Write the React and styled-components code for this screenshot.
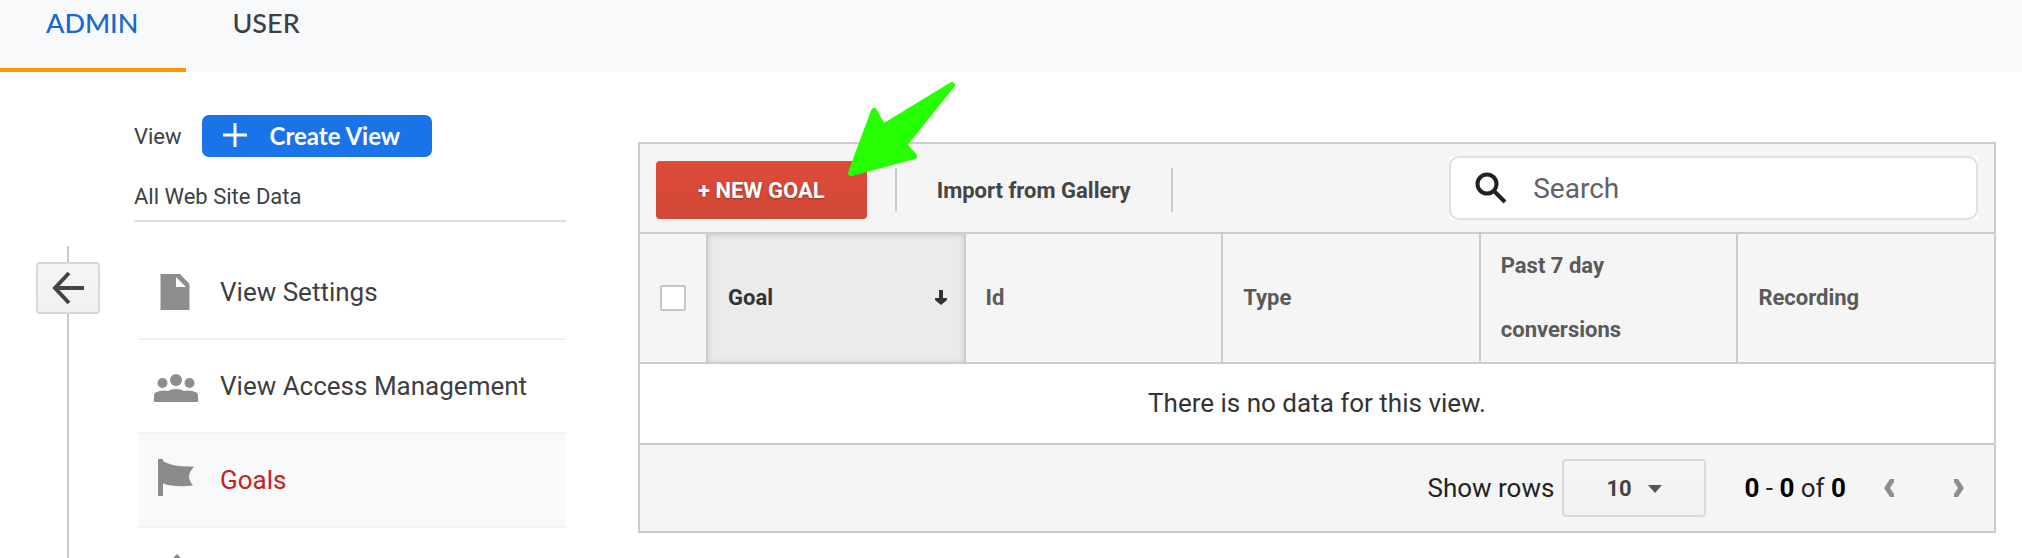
import { useState } from "react";
import styled, { createGlobalStyle } from "styled-components";

const menuItems = [
  { id: "settings", label: "View Settings", icon: <FileIcon /> },
  { id: "access", label: "View Access Management", icon: <PeopleIcon /> },
  { id: "goals", label: "Goals", icon: <FlagIcon /> },
];

const columns = ["Id", "Type", "Past 7 day conversions", "Recording"];

const App = () => {
  const [tab, setTab] = useState("ADMIN");
  const [active, setActive] = useState("goals");
  const [search, setSearch] = useState("");

  return (
    <Page>
      <GlobalStyle />
      <TopBar>
        {["ADMIN", "USER"].map((name) => (
          <Tab key={name} $active={tab === name} onClick={() => setTab(name)}>
            {name}
          </Tab>
        ))}
      </TopBar>

      <Main>
        <Rail>
          <BackButton aria-label="Back">
            <BackIcon />
          </BackButton>
        </Rail>

        <Sidebar>
          <ViewHeader>
            <span>View</span>
            <CreateButton>
              <PlusIcon />
              Create View
            </CreateButton>
          </ViewHeader>
          <ViewName>All Web Site Data</ViewName>
          <Menu>
            {menuItems.map((item) => (
              <MenuItem
                key={item.id}
                href={`#${item.id}`}
                $active={active === item.id}
                onClick={() => setActive(item.id)}
              >
                {item.icon}
                {item.label}
              </MenuItem>
            ))}
            <MenuItem href="#content" aria-label="Content Grouping">
              <GroupingIcon />
            </MenuItem>
          </Menu>
        </Sidebar>

        <Panel>
          <Toolbar>
            <Actions>
              <NewGoalWrap>
                <NewGoal>+ NEW GOAL</NewGoal>
                <Pointer />
              </NewGoalWrap>
              <ImportButton>Import from Gallery</ImportButton>
            </Actions>
            <SearchWrap>
              <SearchBox>
                <SearchIcon />
                <SearchInput
                  type="text"
                  aria-label="Search"
                  placeholder="Search"
                  value={search}
                  onChange={(e) => setSearch(e.target.value)}
                />
              </SearchBox>
            </SearchWrap>
          </Toolbar>

          <Table>
            <thead>
              <tr>
                <CheckHead>
                  <Checkbox type="checkbox" aria-label="Select all goals" />
                </CheckHead>
                <Head $sorted>
                  <SortLabel>
                    Goal
                    <SortIcon />
                  </SortLabel>
                </Head>
                {columns.map((name) => (
                  <Head key={name}>{name}</Head>
                ))}
              </tr>
            </thead>
            <tbody>
              <tr>
                <Empty colSpan={6}>There is no data for this view.</Empty>
              </tr>
            </tbody>
          </Table>

          <Footer>
            <label htmlFor="rows">Show rows</label>
            <SelectWrap>
              <RowSelect id="rows" defaultValue="10">
                <option>10</option>
                <option>25</option>
                <option>50</option>
              </RowSelect>
              <Caret />
            </SelectWrap>
            <Range>
              <b>0</b> - <b>0</b> of <b>0</b>
            </Range>
            <PageButton aria-label="Previous page">
              <ChevronIcon d="M10 0H6L0 9l6 9h4V15L6 9l4-6z" />
            </PageButton>
            <PageButton aria-label="Next page">
              <ChevronIcon d="M0 0h4l6 9-6 9H0v-3l4-6-4-6z" />
            </PageButton>
          </Footer>
        </Panel>
      </Main>
    </Page>
  );
};

export default App;

// Icons
function FileIcon() {
  return (
    <svg width="44" height="44" viewBox="0 0 44 44" fill="#8d8d8d">
      <path fillRule="evenodd" d="M6.500 4H26l9.500 10v26h-29zM22 7v10h10z" />
    </svg>
  );
}

function PeopleIcon() {
  return (
    <svg width="44" height="44" viewBox="0 0 44 44" fill="#8d8d8d">
      <circle cx="22" cy="16" r="6" />
      <circle cx="8.500" cy="19" r="5" />
      <circle cx="35.500" cy="19" r="5" />
      <path d="M0 38v-7q0-4 10-4.500 3 0 4 .500 3-2 8-2t8 2q1-.500 4-.500 10 .500 10 4.500v7z" />
    </svg>
  );
}

function FlagIcon() {
  return (
    <svg width="44" height="44" viewBox="0 0 44 44" fill="#8a8c8b">
      <path d="M4 1h5v2q8 6 31 5.500-5 6-5 10t4 9q-19 2-30-2V38H4z" />
    </svg>
  );
}

function GroupingIcon() {
  return (
    <svg width="44" height="44" viewBox="0 0 44 44" fill="#8d8d8d">
      <path d="M23 2l6 6v6H17V8zM6 20h32v20H6z" />
    </svg>
  );
}

function BackIcon() {
  return (
    <svg width="34" height="36" viewBox="0 0 34 36" fill="none" stroke="#444" strokeWidth="4">
      <path d="M18 3L4 18l14 15M3 18h30" />
    </svg>
  );
}

function PlusIcon() {
  return (
    <svg width="26" height="26" viewBox="0 0 26 26" stroke="#fff" strokeWidth="3">
      <path d="M13 1v24M1 13h24" />
    </svg>
  );
}

function SearchIcon() {
  return (
    <svg width="32" height="32" viewBox="0 0 32 32" fill="none" stroke="#222" strokeWidth="4">
      <circle cx="12" cy="12" r="9.500" />
      <path d="M18.500 18.500L30 30" />
    </svg>
  );
}

function SortIcon() {
  return (
    <svg width="12" height="16" viewBox="0 0 12 16" fill="#333">
      <path d="M4 0h4v8h4v2l-6 5-6-5V8h4z" />
    </svg>
  );
}

function ChevronIcon({ d }) {
  return (
    <svg width="10" height="18" viewBox="0 0 10 18" fill="#8f8f8f">
      <path d={d} />
    </svg>
  );
}

function Caret() {
  return (
    <CaretSvg width="14" height="8" viewBox="0 0 14 8" fill="#555">
      <path d="M0 0h14L7 8z" />
    </CaretSvg>
  );
}

function Pointer() {
  return (
    <PointerSvg width="112" height="100" viewBox="0 0 112 100">
      <path
        d="M107 6L38 48 29 32 6 94 69 77 59 66z"
        fill="#26ff00"
        stroke="#26ff00"
        strokeWidth="6"
        strokeLinejoin="round"
      />
    </PointerSvg>
  );
}

// Styles
const GlobalStyle = createGlobalStyle`
  * {
    box-sizing: border-box;
  }

  body {
    margin: 0;
    background: #fff;
    font-family: Roboto, "Liberation Sans", sans-serif;
  }

  button, input, select {
    font-family: inherit;
    margin: 0;
  }

  button {
    cursor: pointer;
  }

  svg {
    display: block;
    flex: none;
  }
`;

const Page = styled.div`
  display: flex;
  flex-direction: column;
  height: 100vh;
  overflow: hidden;
  color: #3c4043;
`;

const TopBar = styled.nav`
  display: flex;
  flex: none;
  background: #f8f9fb;
`;

const Tab = styled.button`
  padding: 8px 48px 30px 46px;
  border: none;
  border-bottom: 4px solid ${({ $active }) => ($active ? "#ff9800" : "transparent")};
  background: none;
  color: ${({ $active }) => ($active ? "#1967d2" : "#3c4043")};
  font-family: Lato, sans-serif;
  font-size: 27px;
  font-weight: 500;
  line-height: 30px;
`;

const Main = styled.main`
  display: flex;
  align-items: flex-start;
  flex: 1;
  min-height: 0;
`;

const Rail = styled.div`
  display: flex;
  flex-direction: column;
  align-items: center;
  align-self: stretch;
  flex: none;
  width: 64px;
  margin: 174px 34px 0 36px;

  &::before,
  &::after {
    content: "";
    width: 2px;
    height: 16px;
    background: #ccc;
  }

  &::after {
    flex: 1;
  }
`;

const BackButton = styled.button`
  display: flex;
  align-items: center;
  justify-content: center;
  width: 64px;
  height: 52px;
  padding: 0;
  border: 2px solid #d8d8d8;
  border-radius: 4px;
  background: linear-gradient(#f5f5f5, #f1f1f1);
`;

const Sidebar = styled.aside`
  flex: none;
  width: 432px;
  padding-top: 43px;
  font-size: 22px;
`;

const ViewHeader = styled.div`
  display: flex;
  align-items: center;
  gap: 20px;
`;

const CreateButton = styled.button`
  display: flex;
  align-items: center;
  gap: 22px;
  height: 42px;
  padding: 0 32px 2px 20px;
  border: none;
  border-radius: 7px;
  background: #1a73e8;
  color: #fff;
  font-family: Lato, sans-serif;
  font-size: 24px;
  font-weight: 700;
`;

const ViewName = styled.div`
  padding: 25px 0 8px;
  border-bottom: 2px solid #dadce0;
  line-height: 30px;
`;

const Menu = styled.nav`
  padding: 24px 0 0 4px;
`;

const MenuItem = styled.a`
  display: flex;
  align-items: center;
  gap: 22px;
  height: 94px;
  padding-left: 16px;
  border-bottom: 2px solid #f1f2f3;
  background: ${({ $active }) => ($active ? "#f8f9fb" : "none")};
  color: ${({ $active }) => ($active ? "#c5221f" : "#3c4043")};
  font-size: 26px;
  text-decoration: none;
`;

const Panel = styled.section`
  flex: 1;
  min-width: 0;
  margin: 70px 26px 0 72px;
  border: 2px solid #ccc;
  background: #f5f5f5;
`;

const Toolbar = styled.div`
  display: flex;
  align-items: center;
  justify-content: space-between;
  height: 90px;
  padding: 0 16px;
  border-bottom: 2px solid #ccc;
`;

const Actions = styled.div`
  display: flex;
  align-items: center;
  padding-top: 4px;
`;

const NewGoalWrap = styled.div`
  position: relative;
`;

const NewGoal = styled.button`
  display: block;
  height: 58px;
  padding: 0 42px;
  border: none;
  border-radius: 4px;
  background: linear-gradient(#dd4b39, #d14836);
  color: #fff;
  font-size: 22px;
  font-weight: 700;
  text-shadow: 0 1px 2px rgba(0, 0, 0, 0.3);
`;

const PointerSvg = styled.svg`
  position: absolute;
  right: -90px;
  bottom: 40px;
  pointer-events: none;
`;

const ImportButton = styled.button`
  height: 44px;
  margin-left: 28px;
  padding: 0 40px;
  border: solid #ccc;
  border-width: 0 2px;
  background: none;
  color: #444;
  font-size: 22px;
  font-weight: 700;
`;

const SearchWrap = styled.div`
  width: 40%;
  background: #fff;
`;

const SearchBox = styled.div`
  display: flex;
  align-items: center;
  gap: 24px;
  height: 64px;
  padding: 0 24px;
  border: 2px solid #e0e0e0;
  border-radius: 10px;
`;

const SearchInput = styled.input`
  flex: 1;
  min-width: 0;
  border: none;
  outline: none;
  background: none;
  font-size: 28px;

  &::placeholder {
    color: #5f6368;
  }
`;

const Table = styled.table`
  width: 100%;
  border-collapse: separate;
  border-spacing: 0;
  table-layout: fixed;
`;

const Head = styled.th`
  padding: 0 17px 0 20px;
  border-left: 2px solid #ccc;
  background: ${({ $sorted }) => ($sorted ? "#ebebeb" : "#f5f5f5")};
  box-shadow: ${({ $sorted }) => ($sorted ? "inset 0 1px 6px rgba(0, 0, 0, 0.15)" : "none")};
  color: ${({ $sorted }) => ($sorted ? "#333" : "#5a5a5a")};
  font-size: 22px;
  line-height: 64px;
  text-align: left;
`;

const CheckHead = styled.th`
  width: 66px;
  padding: 0 20px;
`;

const Checkbox = styled.input`
  display: block;
  width: 26px;
  height: 26px;
  border: 2px solid #c6c6c6;
  border-radius: 2px;
  background: #fff;
  appearance: none;
`;

const SortLabel = styled.div`
  display: flex;
  align-items: center;
  justify-content: space-between;
`;

const Empty = styled.td`
  height: 83px;
  padding: 0 0 2px;
  border: solid #ccc;
  border-width: 2px 0;
  background: #fff;
  color: #333;
  font-size: 26px;
  text-align: center;
`;

const Footer = styled.div`
  display: flex;
  align-items: center;
  justify-content: flex-end;
  height: 86px;
  color: #222;
  font-size: 26px;
`;

const SelectWrap = styled.div`
  position: relative;
  margin: 0 38px 0 8px;
`;

const RowSelect = styled.select`
  display: block;
  width: 144px;
  height: 58px;
  padding: 0 0 0 42px;
  border: 2px solid #d8d8d8;
  border-radius: 4px;
  background: linear-gradient(#f5f5f5, #f1f1f1);
  color: #444;
  font-size: 22px;
  font-weight: 700;
  appearance: none;
`;

const CaretSvg = styled.svg`
  position: absolute;
  top: 26px;
  right: 44px;
  pointer-events: none;
`;

const Range = styled.span`
  margin-right: 8px;

  b {
    color: #000;
  }
`;

const PageButton = styled.button`
  display: flex;
  align-items: center;
  justify-content: center;
  width: 70px;
  height: 58px;
  padding: 0;
  border: none;
  background: none;
`;
